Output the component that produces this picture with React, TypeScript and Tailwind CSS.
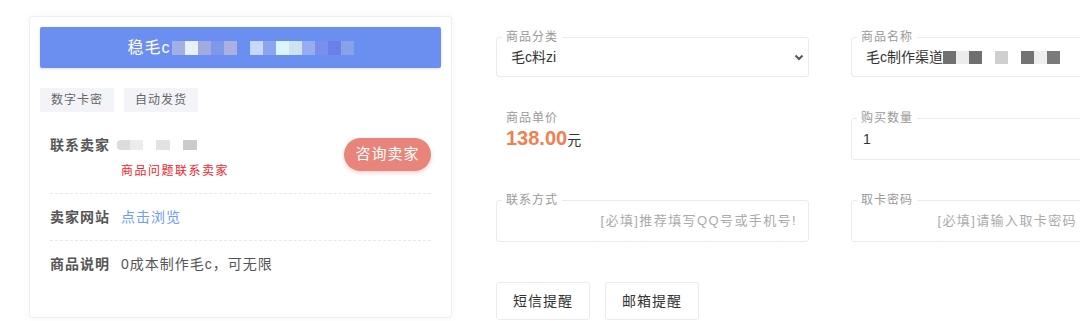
import React from 'react';

const FONT = { fontFamily: '"Liberation Sans", "Noto Sans CJK SC", sans-serif' };

const titleBlur = [
  '#9fb0e6', '#e8f0fc', '#a0ace0', '#7f98ea', '#a8b0e0', '#6b8ff0',
  '#c8d8fc', '#8aa6ec', '#d8f6fc', '#cfe2f0', '#98acf2', '#7890ec', '#6c80ec', '#8aa0e8',
];

const nameBlur = ['#707070', '#ececec', '#6f6f6f', '#ffffff', '#cfcfcf', '#ffffff', '#737373', '#eeeeee', '#7a7a7a'];

const Field: React.FC<{ legend: string; h: string; children: React.ReactNode }> = ({ legend, h, children }) => (
  <fieldset className="border border-[#ebebeb] rounded-[3px] min-w-0">
    <legend className="ml-[5px] px-[4px] text-[12px] leading-[12px] tracking-[1px] text-[#999]">{legend}</legend>
    <div className={`${h} flex items-center px-[14px]`}>{children}</div>
  </fieldset>
);

export default function App() {
  return (
    <div style={FONT} className="w-[1080px] h-[321px] overflow-hidden bg-white flex items-start pl-[29px] pt-[16px]">
      {/* left card */}
      <div className="w-[423px] h-[302px] shrink-0 border border-[#efefef] rounded-[3px] shadow-[0_0_8px_rgba(0,0,0,0.04)] px-[10px] pt-[10px]">
        <div className="h-[41px] rounded-[2px] bg-[#6b8ff0] shadow-[0_1px_3px_rgba(0,0,0,0.12)] flex items-center justify-center">
          <span className="text-white text-[16px] tracking-[1px]">稳毛c</span>
          <span className="flex h-[14px] ml-[1px]">
            {titleBlur.map((c, i) => (
              <span key={i} className="w-[13px] h-[14px]" style={{ backgroundColor: c }} />
            ))}
          </span>
        </div>

        <div className="flex gap-[10px] mt-[20px]">
          <span className="h-[24px] w-[74px] flex items-center justify-center bg-[#f3f4f8] text-[12px] tracking-[1px] text-[#666]">数字卡密</span>
          <span className="h-[24px] w-[74px] flex items-center justify-center bg-[#f3f4f8] text-[12px] tracking-[1px] text-[#666]">自动发货</span>
        </div>

        <div className="mx-[10px] mt-[23px]">
          <div className="flex items-start border-b border-dashed border-[#e8e8e8] pb-[14px]">
            <div className="flex-1">
              <div className="flex items-center h-[20px]">
                <span className="w-[67px] text-[14px] tracking-[1px] font-semibold text-[#555]">联系卖家</span>
                <span className="flex h-[10px]">
                  <span className="w-[13px] bg-[#dcdcdc] rounded-l-[4px]" />
                  <span className="w-[13px] bg-[#ececec]" />
                  <span className="w-[13px]" />
                  <span className="w-[14px] bg-[#e2e2e2]" />
                  <span className="w-[13px]" />
                  <span className="w-[14px] bg-[#cbcbcb]" />
                </span>
              </div>
              <div className="mt-[8px] pl-[71px] text-[12px] leading-[16px] tracking-[1.5px] text-[#f5222d]">商品问题联系卖家</div>
            </div>
            <button className="mt-[3px] h-[33px] w-[87px] rounded-full bg-[#e8847a] text-white text-[15px] tracking-[1px] shadow-[0_2px_4px_rgba(232,132,122,0.35)]">
              咨询卖家
            </button>
          </div>

          <div className="flex items-center py-[13px] border-b border-dashed border-[#e8e8e8]">
            <span className="w-[71px] text-[14px] leading-[20px] tracking-[1px] font-semibold text-[#555]">卖家网站</span>
            <span className="text-[14px] leading-[20px] tracking-[1px] text-[#6d9cf3]">点击浏览</span>
          </div>

          <div className="flex items-center py-[13px]">
            <span className="w-[71px] text-[14px] leading-[20px] tracking-[1px] font-semibold text-[#555]">商品说明</span>
            <span className="text-[14px] leading-[20px] tracking-[1px] text-[#555]">0成本制作毛c，可无限</span>
          </div>
        </div>
      </div>

      {/* right form */}
      <div className="ml-[44px] pt-[15px] shrink-0">
        <div className="grid grid-cols-[313px_240px] gap-x-[42px]">
          <Field legend="商品分类" h="h-[33px] pb-[4px]">
            <span className="flex-1 text-[14px] text-[#333]">毛c料zi</span>
            <svg width="10" height="7" viewBox="0 0 10 7" className="-mr-[10px]">
              <path d="M1.5 1.5 L5 5 L8.5 1.5" fill="none" stroke="#555" strokeWidth="2" />
            </svg>
          </Field>
          <Field legend="商品名称" h="h-[33px] pb-[4px]">
            <span className="text-[14px] text-[#333] whitespace-nowrap">毛c制作渠道</span>
            <span className="flex h-[13px]">
              {nameBlur.map((c, i) => (
                <span key={i} className="w-[13px] h-[13px] shrink-0" style={{ backgroundColor: c }} />
              ))}
            </span>
          </Field>
        </div>

        <div className="grid grid-cols-[313px_240px] gap-x-[42px] mt-[35px]">
          <div className="pl-[10px]">
            <div className="text-[12px] leading-[12px] tracking-[1px] text-[#999]">商品单价</div>
            <div className="mt-[2px] leading-[24px]">
              <span className="text-[20px] font-bold text-[#f0804f]">138.00</span>
              <span className="text-[14px] text-[#333]">元</span>
            </div>
          </div>
          <Field legend="购买数量" h="h-[35px] pb-[4px] !pl-[11px]">
            <span className="text-[14px] text-[#333]">1</span>
          </Field>
        </div>

        <div className="grid grid-cols-[313px_240px] gap-x-[42px] mt-[34px]">
          <Field legend="联系方式" h="h-[35px] pb-[5px] justify-end !pr-[11px]">
            <span className="text-[13px] tracking-[1.4px] text-[#aaa] whitespace-nowrap">[必填]推荐填写QQ号或手机号!</span>
          </Field>
          <Field legend="取卡密码" h="h-[35px] pb-[5px] justify-end !pr-[13px]">
            <span className="text-[13px] tracking-[1.4px] text-[#aaa] whitespace-nowrap">[必填]请输入取卡密码</span>
          </Field>
        </div>

        <div className="flex gap-[15px] mt-[40px]">
          <button className="h-[38px] w-[94px] border border-[#ebebeb] rounded-[3px] text-[14px] tracking-[1px] text-[#333]">短信提醒</button>
          <button className="h-[38px] w-[94px] border border-[#ebebeb] rounded-[3px] text-[14px] tracking-[1px] text-[#333]">邮箱提醒</button>
        </div>
      </div>
    </div>
  );
}
